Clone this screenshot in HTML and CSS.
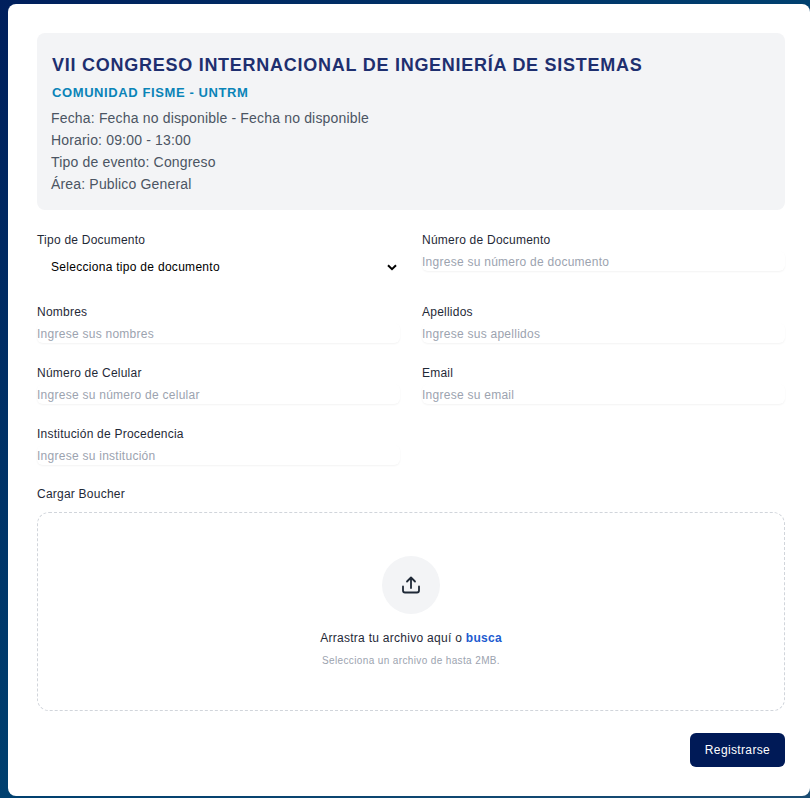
FILE: index.html
```html
<!DOCTYPE html>
<html lang="es">
<head>
    <meta charset="UTF-8">
    <meta name="viewport" content="width=device-width, initial-scale=1.0">
    <title>Registro - VII Congreso Internacional de Ingeniería de Sistemas</title>
    <link rel="stylesheet" href="styles.css">
</head>
<body>
    <div class="modal">
        <div class="event-card">
            <h1>VII CONGRESO INTERNACIONAL DE INGENIERÍA DE SISTEMAS</h1>
            <h2>COMUNIDAD FISME - UNTRM</h2>
            <p>Fecha: Fecha no disponible - Fecha no disponible</p>
            <p>Horario: 09:00 - 13:00</p>
            <p>Tipo de evento: Congreso</p>
            <p>Área: Publico General</p>
        </div>

        <form class="form-grid">
            <div class="field field-select">
                <label for="doc-type">Tipo de Documento</label>
                <div class="select-wrap">
                    <select id="doc-type">
                        <option>Selecciona tipo de documento</option>
                    </select>
                    <svg class="chevron" viewBox="0 0 10 7" width="10" height="7" aria-hidden="true">
                        <path d="M1 1.2l4 4 4-4" fill="none" stroke="#000" stroke-width="2"/>
                    </svg>
                </div>
            </div>
            <div class="field">
                <label for="doc-number">Número de Documento</label>
                <input id="doc-number" type="text" placeholder="Ingrese su número de documento">
            </div>
            <div class="field">
                <label for="names">Nombres</label>
                <input id="names" type="text" placeholder="Ingrese sus nombres">
            </div>
            <div class="field">
                <label for="surnames">Apellidos</label>
                <input id="surnames" type="text" placeholder="Ingrese sus apellidos">
            </div>
            <div class="field">
                <label for="phone">Número de Celular</label>
                <input id="phone" type="text" placeholder="Ingrese su número de celular">
            </div>
            <div class="field">
                <label for="email">Email</label>
                <input id="email" type="text" placeholder="Ingrese su email">
            </div>
            <div class="field">
                <label for="institution">Institución de Procedencia</label>
                <input id="institution" type="text" placeholder="Ingrese su institución">
            </div>
        </form>

        <div class="upload">
            <span class="upload-label">Cargar Boucher</span>
            <div class="dropzone">
                <div class="upload-icon">
                    <svg viewBox="0 0 24 24" width="24" height="24" fill="none" stroke="#1f2937" stroke-width="1.8" stroke-linecap="round" stroke-linejoin="round" aria-hidden="true">
                        <path d="M12 15V4.5M8 8.5l4-4 4 4"/>
                        <path d="M4 13.5v4a2 2 0 0 0 2 2h12a2 2 0 0 0 2-2v-4"/>
                    </svg>
                </div>
                <p class="upload-text">Arrastra tu archivo aquí o <a href="#">busca</a></p>
                <p class="upload-hint">Selecciona un archivo de hasta 2MB.</p>
            </div>
        </div>

        <div class="actions">
            <button type="button">Registrarse</button>
        </div>
    </div>
</body>
</html>
```

FILE: styles.css
```css
* {
    box-sizing: border-box;
}

html, body {
    height: 100%;
}

body {
    margin: 0;
    height: 798px;
    overflow: hidden;
    padding: 4px 0 2px 8px;
    background: linear-gradient(135deg, #001f5c 0%, #00406f 50%, #1b4d73 100%);
    font-family: "Liberation Sans", Arial, sans-serif;
}

.modal {
    height: 792px;
    background-color: #fff;
    border-radius: 8px;
    padding: 29px 25px 0 29px;
}

/* Tarjeta del evento */
.event-card {
    height: 177px;
    padding: 20px 15px 0 14px;
    background-color: #f3f4f6;
    border-radius: 8px;
}

.event-card h1 {
    margin: 0 0 0 1px;
    font-size: 18px;
    line-height: 24px;
    font-weight: 700;
    letter-spacing: 0.74px;
    color: #1e2f6f;
}

.event-card h2 {
    margin: 7px 0 5px 1px;
    font-size: 13px;
    line-height: 18px;
    font-weight: 700;
    letter-spacing: 0.6px;
    color: #0a84b8;
}

.event-card p {
    margin: 0;
    font-size: 14px;
    line-height: 22px;
    letter-spacing: 0.17px;
    color: #4b5563;
}

/* Formulario */
.form-grid {
    display: grid;
    grid-template-columns: 363px 363px;
    column-gap: 22px;
    margin-top: 22px;
}

.field {
    height: 61.25px;
}

.field-select {
    height: 71.5px;
}

.field label,
.upload-label {
    display: block;
    font-size: 12px;
    line-height: 16px;
    letter-spacing: 0.23px;
    color: #1f2937;
}

.field input {
    display: block;
    width: 100%;
    height: 20px;
    padding: 2px 0 0;
    margin-top: 3px;
    border: none;
    outline: none;
    border-radius: 6px;
    background-color: #fff;
    box-shadow: 0 1px 2px rgba(0, 0, 0, 0.05);
    font-family: inherit;
    font-size: 12px;
    letter-spacing: 0.26px;
    color: #1f2937;
}

.field input::placeholder {
    color: #9ca3af;
    opacity: 1;
}

.select-wrap {
    position: relative;
    margin-top: 7px;
}

.select-wrap select {
    display: block;
    width: 100%;
    height: 24px;
    padding: 0 0 0 14px;
    border: none;
    outline: none;
    background: #fff;
    appearance: none;
    font-family: inherit;
    font-size: 12px;
    letter-spacing: 0.29px;
    color: #000;
}

.chevron {
    position: absolute;
    right: 3px;
    top: 9px;
}

/* Zona de carga */
.upload {
    margin-top: -1px;
}

.upload-label {
    margin-bottom: 10px;
}

.dropzone {
    display: flex;
    flex-direction: column;
    align-items: center;
    height: 199px;
    padding-top: 43px;
    border: 1px dashed #d1d5db;
    border-radius: 12px;
}

.upload-icon {
    display: flex;
    align-items: center;
    justify-content: center;
    width: 58px;
    height: 58px;
    border-radius: 50%;
    background-color: #f3f4f6;
}

.upload-text {
    margin: 16px 0 0;
    font-size: 12px;
    line-height: 16px;
    letter-spacing: 0.28px;
    color: #1f2937;
}

.upload-text a {
    font-weight: 700;
    color: #1d5bd0;
    text-decoration: none;
}

.upload-hint {
    margin: 8px 0 0;
    font-size: 10px;
    line-height: 14px;
    letter-spacing: 0.37px;
    color: #9ca3af;
}

.actions {
    display: flex;
    justify-content: flex-end;
    margin-top: 22px;
}

.actions button {
    width: 95px;
    height: 34px;
    border: none;
    border-radius: 6px;
    background-color: #001a57;
    color: #fff;
    font-family: inherit;
    font-size: 12px;
    letter-spacing: 0.36px;
    cursor: pointer;
}
```
